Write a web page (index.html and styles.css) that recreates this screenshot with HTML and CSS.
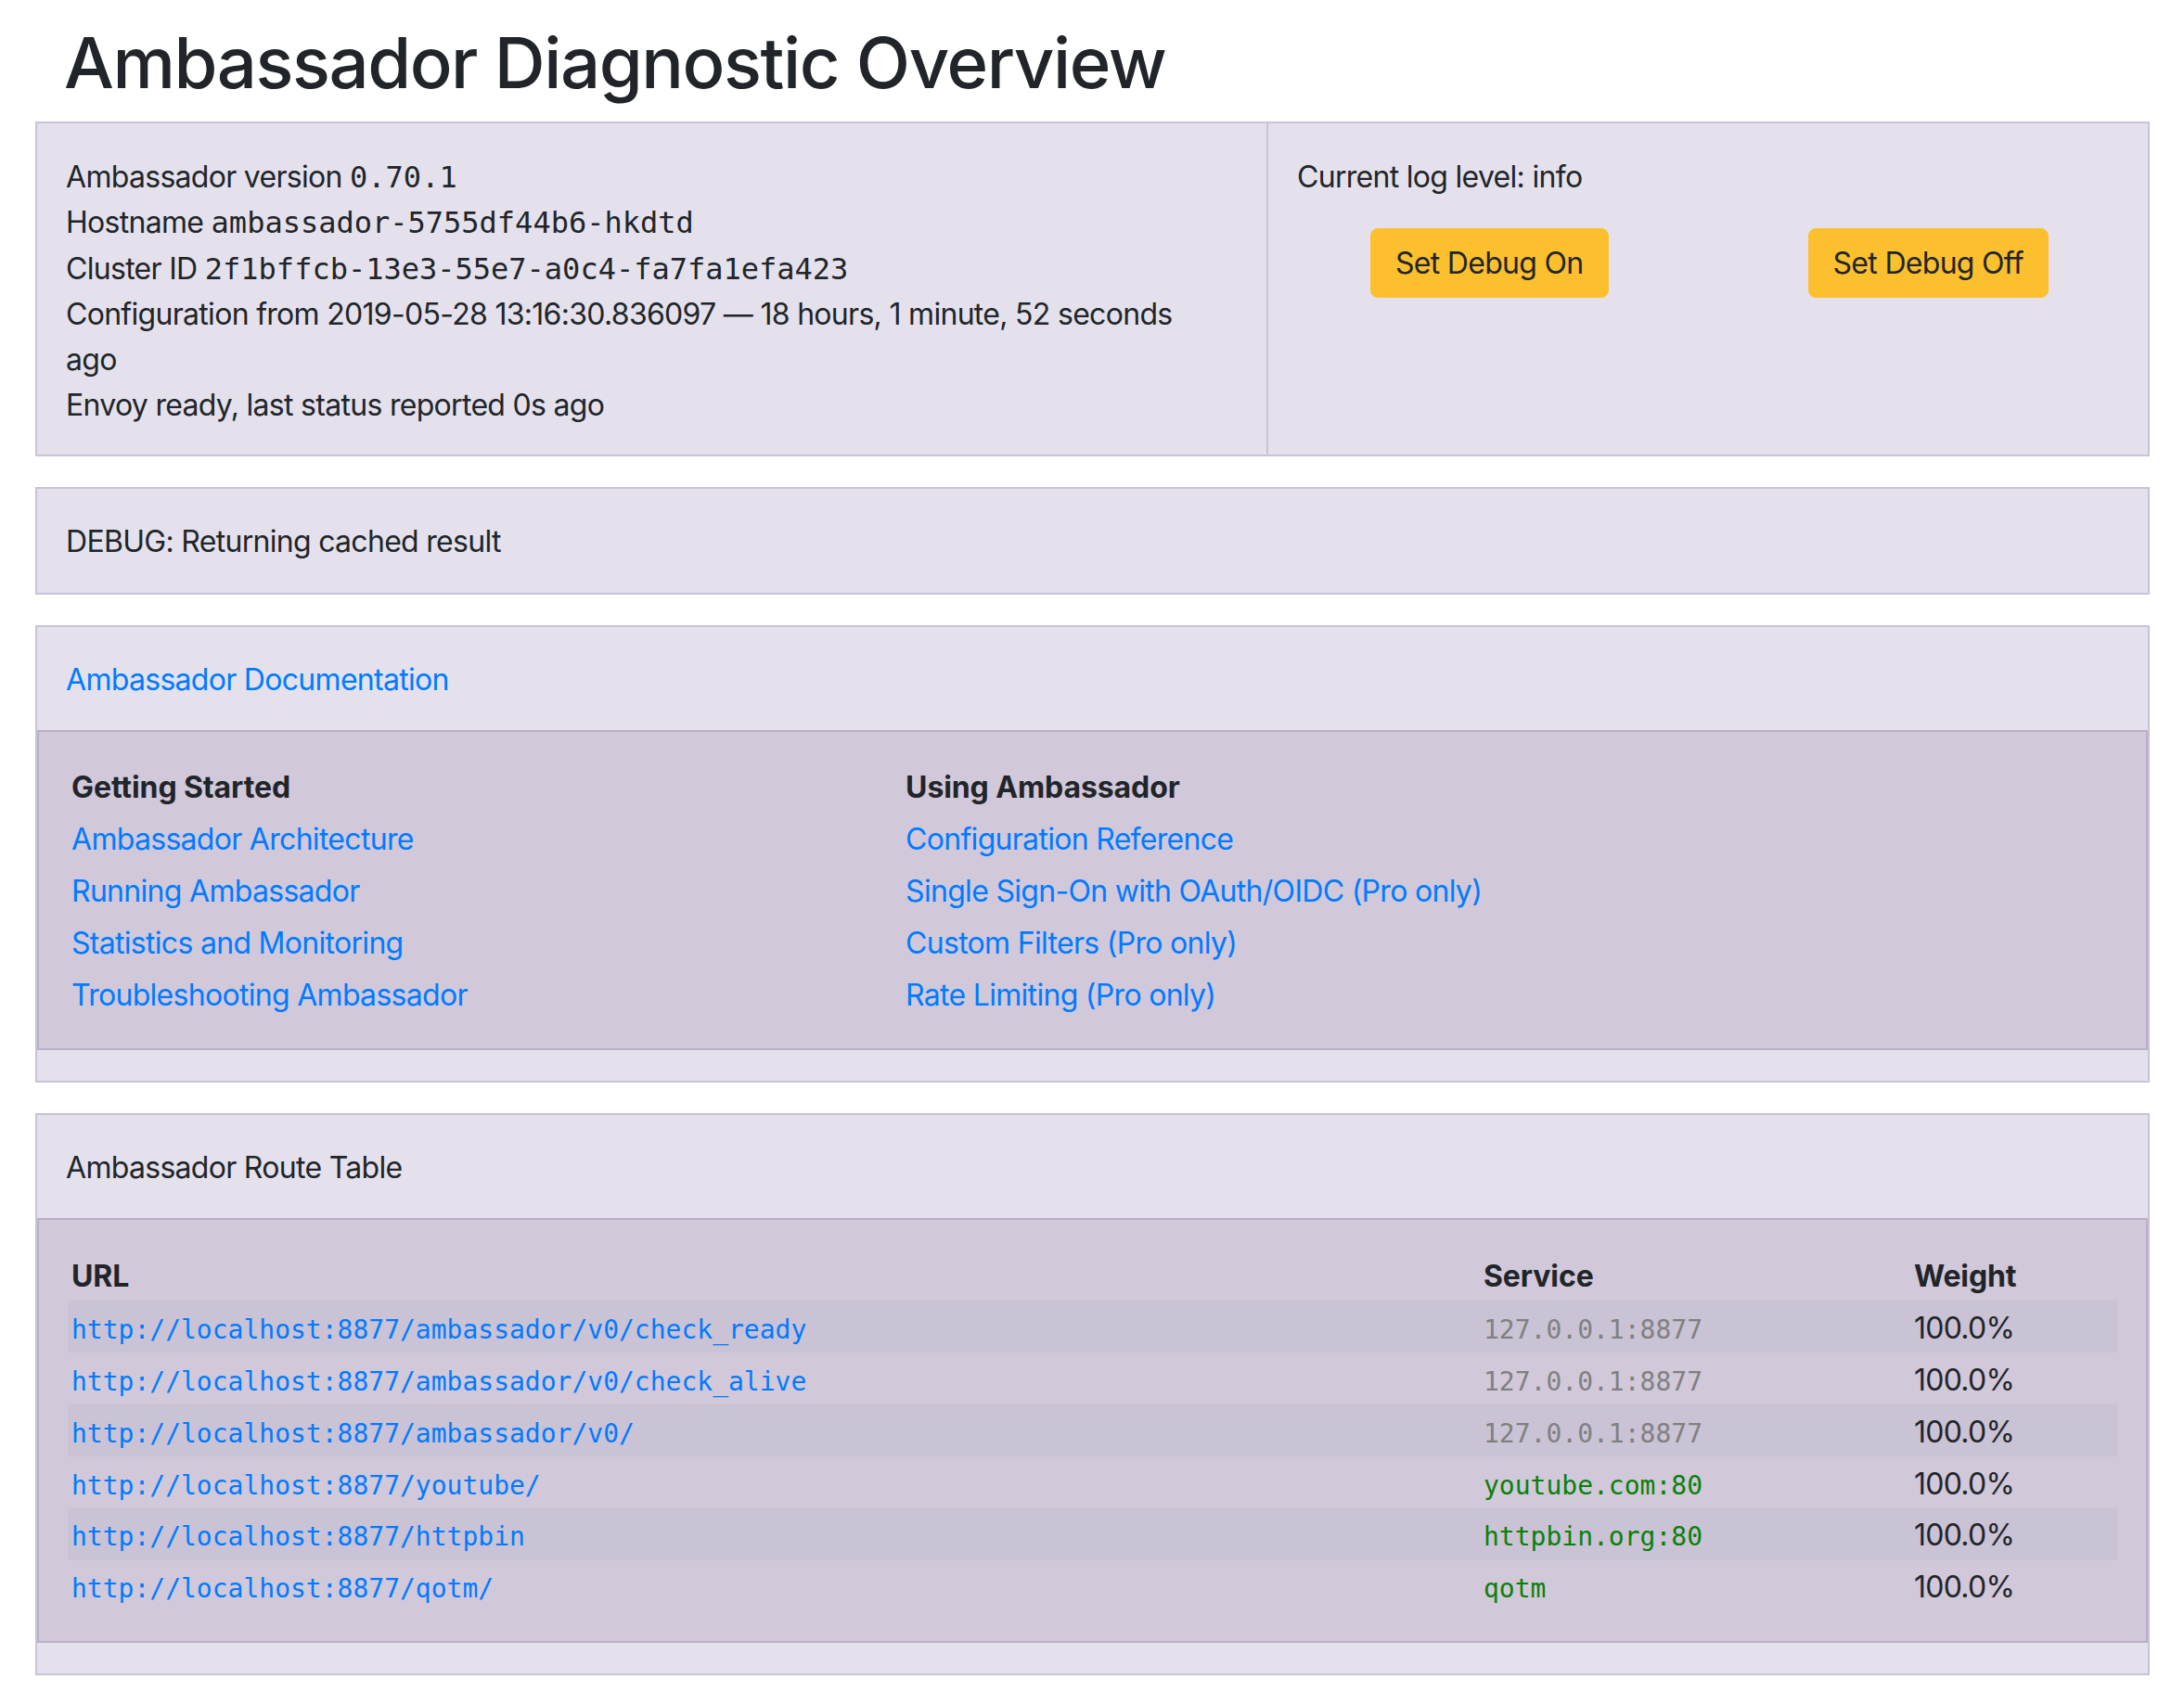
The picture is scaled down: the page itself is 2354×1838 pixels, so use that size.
FILE: index.html
```html
<!DOCTYPE html>
<html lang="en">
<head>
<meta charset="utf-8">
<title>Ambassador Diagnostic Overview</title>
<link rel="stylesheet" href="styles.css">
</head>
<body>
<div class="page">
  <h1 class="title">Ambassador Diagnostic Overview</h1>

  <section class="card split">
    <div class="col-info">
      <div>Ambassador version <code class="mono">0.70.1</code></div>
      <div>Hostname <code class="mono">ambassador-5755df44b6-hkdtd</code></div>
      <div>Cluster ID <code class="mono">2f1bffcb-13e3-55e7-a0c4-fa7fa1efa423</code></div>
      <div>Configuration from 2019-05-28 13:16:30.836097 — 18 hours, 1 minute, 52 seconds ago</div>
      <div>Envoy ready, last status reported 0s ago</div>
    </div>
    <div class="col-log">
      <div>Current log level: info</div>
      <div class="btns">
        <button class="btn">Set Debug On</button>
        <button class="btn btn-off">Set Debug Off</button>
      </div>
    </div>
  </section>

  <section class="card">
    <div class="card-head">DEBUG: Returning cached result</div>
  </section>

  <section class="card">
    <div class="card-head"><a class="link" href="#">Ambassador Documentation</a></div>
    <div class="inner">
      <table class="tbl docs">
        <thead>
          <tr><th class="c-docs1">Getting Started</th><th>Using Ambassador</th></tr>
        </thead>
        <tbody>
          <tr><td><a class="link" href="#">Ambassador Architecture</a></td><td><a class="link" href="#">Configuration Reference</a></td></tr>
          <tr><td><a class="link" href="#">Running Ambassador</a></td><td><a class="link" href="#">Single Sign-On with OAuth/OIDC (Pro only)</a></td></tr>
          <tr><td><a class="link" href="#">Statistics and Monitoring</a></td><td><a class="link" href="#">Custom Filters (Pro only)</a></td></tr>
          <tr><td><a class="link" href="#">Troubleshooting Ambassador</a></td><td><a class="link" href="#">Rate Limiting (Pro only)</a></td></tr>
        </tbody>
      </table>
    </div>
    <div class="card-foot"></div>
  </section>

  <section class="card">
    <div class="card-head">Ambassador Route Table</div>
    <div class="inner">
      <table class="tbl routes">
        <thead>
          <tr><th class="c-url">URL</th><th class="c-svc">Service</th><th>Weight</th></tr>
        </thead>
        <tbody>
          <tr><td><a class="link code" href="#">http://localhost:8877/ambassador/v0/check_ready</a></td><td><span class="code svc-local">127.0.0.1:8877</span></td><td>100.0%</td></tr>
          <tr><td><a class="link code" href="#">http://localhost:8877/ambassador/v0/check_alive</a></td><td><span class="code svc-local">127.0.0.1:8877</span></td><td>100.0%</td></tr>
          <tr><td><a class="link code" href="#">http://localhost:8877/ambassador/v0/</a></td><td><span class="code svc-local">127.0.0.1:8877</span></td><td>100.0%</td></tr>
          <tr><td><a class="link code" href="#">http://localhost:8877/youtube/</a></td><td><span class="code svc-ext">youtube.com:80</span></td><td>100.0%</td></tr>
          <tr><td><a class="link code" href="#">http://localhost:8877/httpbin</a></td><td><span class="code svc-ext">httpbin.org:80</span></td><td>100.0%</td></tr>
          <tr><td><a class="link code" href="#">http://localhost:8877/qotm/</a></td><td><span class="code svc-ext">qotm</span></td><td>100.0%</td></tr>
        </tbody>
      </table>
    </div>
    <div class="card-foot"></div>
  </section>
</div>
</body>
</html>
```

FILE: styles.css
```css
html, body {
  margin: 0;
  padding: 0;
  background: #ffffff;
}

body {
  font-family: "Inter", "Liberation Sans", sans-serif;
  font-size: 32px;
  line-height: 49.2px;
  letter-spacing: -0.7px;
  color: #212529;
}

.page {
  padding: 0 37px 40px 38px;
}

.title {
  margin: 22px 0 18px 31px;
  font-size: 76px;
  font-weight: 500;
  line-height: 1.2;
  letter-spacing: -1.45px;
  color: #212529;
}

.card {
  background: #e4e1ec;
  border: 2px solid #c9c3d7;
  margin-bottom: 33px;
}

.split {
  display: flex;
}

.col-info {
  width: 58.33%;
  box-sizing: border-box;
  padding: 33px 45px 29px 31px;
  border-right: 2px solid #c9c3d7;
}

.col-log {
  flex: 1;
  padding: 33px 31px 29px 31px;
}

.mono {
  font-family: "DejaVu Sans Mono", "Liberation Mono", monospace;
  font-size: 32px;
  line-height: 1;
  letter-spacing: 0;
}

.btns {
  display: flex;
  gap: 215px;
  padding-left: 79px;
  margin-top: 31px;
}

.btn {
  font-family: inherit;
  font-size: 32px;
  line-height: 49px;
  letter-spacing: -0.7px;
  color: #212529;
  background: #fcc02f;
  border: 1px solid #fcc02f;
  border-radius: 8px;
  padding: 12px 26px;
}

.card-head {
  padding: 32px 31px 30px 31px;
}

.card-foot {
  height: 33px;
}

.inner {
  background: #d1c8da;
  border: 2px solid #b9afca;
  padding: 31px;
}

.link {
  color: #007bff;
  text-decoration: none;
}

.tbl {
  width: 100%;
  border-collapse: collapse;
}

.tbl th,
.tbl td {
  padding: 4.5px 5px 2.2px 4px;
  text-align: left;
  vertical-align: top;
}

.tbl th {
  font-weight: 700;
  letter-spacing: -0.1px;
}

.c-docs1 {
  width: 40.7%;
}

.c-url {
  width: 68.9%;
}

.c-svc {
  width: 21%;
}

.routes tbody tr:nth-child(odd) {
  background: #cac2d5;
}

.code {
  font-family: "DejaVu Sans Mono", "Liberation Mono", monospace;
  font-size: 28px;
  line-height: 1;
  letter-spacing: 0;
}

.svc-local {
  color: #808080;
}

.svc-ext {
  color: #0a800a;
}
```
